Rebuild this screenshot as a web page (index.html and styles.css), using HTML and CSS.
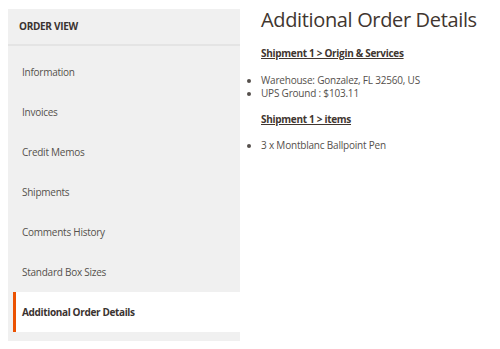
FILE: index.html
```html
<!DOCTYPE html>
<html>
<head>
<meta charset="utf-8">
<link rel="stylesheet" href="styles.css">
</head>
<body>
<div class="page">
  <aside class="sidebar">
    <div class="sidebar-title">ORDER VIEW</div>
    <ul class="nav">
      <li class="nav-item">Information</li>
      <li class="nav-item">Invoices</li>
      <li class="nav-item">Credit Memos</li>
      <li class="nav-item">Shipments</li>
      <li class="nav-item">Comments History</li>
      <li class="nav-item">Standard Box Sizes</li>
      <li class="nav-item active">Additional Order Details</li>
    </ul>
  </aside>
  <main class="content">
    <h1 class="title">Additional Order Details</h1>
    <h2 class="section">Shipment 1 &gt; Origin &amp; Services</h2>
    <ul class="list">
      <li>Warehouse: Gonzalez, FL 32560, US</li>
      <li>UPS Ground : $103.11</li>
    </ul>
    <h2 class="section">Shipment 1 &gt; items</h2>
    <ul class="list list-items">
      <li>3 x Montblanc Ballpoint Pen</li>
    </ul>
  </main>
</div>
</body>
</html>
```
FILE: styles.css
```css
html, body {
  margin: 0;
  padding: 0;
  background: #fff;
}
body {
  font-family: "Open Sans", "Liberation Sans", sans-serif;
  color: #41362f;
}
.page {
  display: flex;
  align-items: flex-start;
  padding: 9px 0 0 8px;
}
.sidebar {
  width: 232px;
  background: #f0f0f0;
  padding-bottom: 9px;
  flex-shrink: 0;
}
.sidebar-title {
  height: 35px;
  line-height: 35px;
  padding-left: 11px;
  font-size: 10px;
  letter-spacing: -0.3px;
  font-weight: 700;
  color: #3a3330;
  border-bottom: 2px solid #e4e4e4;
  margin-bottom: 6px;
}
.nav {
  list-style: none;
  margin: 0;
  padding: 0;
}
.nav-item {
  height: 40px;
  line-height: 40px;
  padding-left: 14px;
  font-size: 10px;
  letter-spacing: -0.25px;
  color: #55504c;
}
.nav-item.active {
  margin-left: 5px;
  padding-left: 6px;
  background: #fff;
  border-left: 3px solid #eb5202;
  font-weight: 700;
  letter-spacing: -0.35px;
  color: #3a3330;
}
.content {
  flex: 1;
  margin-left: 21px;
  white-space: nowrap;
}
.title {
  margin: 0 0 15px;
  font-size: 20px;
  font-weight: 400;
  letter-spacing: -0.35px;
  line-height: 22px;
  color: #41362f;
}
.section {
  margin: 12px 0 0;
  font-size: 10px;
  letter-spacing: -0.3px;
  font-weight: 700;
  line-height: 15px;
  text-decoration: underline;
  color: #41362f;
}
.list {
  margin: 13px 0 12px;
  padding: 0;
  font-size: 10px;
  letter-spacing: -0.2px;
  line-height: 13px;
  color: #55504c;
}
.list-items {
  margin-top: 12px;
}
.list li {
  list-style: disc outside;
}
```
